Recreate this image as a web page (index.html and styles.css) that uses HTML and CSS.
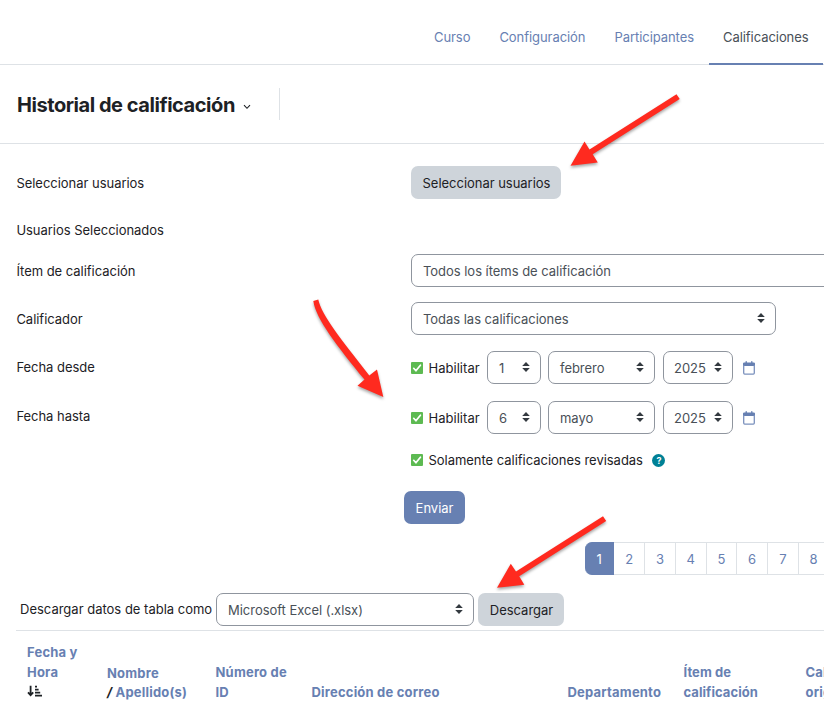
FILE: index.html
```html
<!DOCTYPE html>
<html lang="es">
<head>
<meta charset="utf-8">
<title>Historial de calificación</title>
<link rel="stylesheet" href="styles.css">
</head>
<body>
<svg class="defs" width="0" height="0" aria-hidden="true">
  <symbol id="sort" viewBox="0 0 8 10"><path d="M4 0 7.8 4H.2zM4 10 .2 6h7.6z" fill="#343a40"/></symbol>
  <symbol id="check" viewBox="0 0 12 12"><rect width="12" height="12" rx="1" fill="#5dba52"/><path d="M2.7 6.3 4.9 8.8 9.4 3.2" fill="none" stroke="#fff" stroke-width="1.7" stroke-linecap="round" stroke-linejoin="round"/></symbol>
  <symbol id="calendar" viewBox="0 0 12 14"><path d="M1.2 1.4h9.6a1.2 1.2 0 0 1 1.2 1.2V5H0V2.6a1.2 1.2 0 0 1 1.2-1.2z" fill="#6780b2"/><path d="M3.2.7v2M8.8.7v2" stroke="#6780b2" stroke-width="1.4" stroke-linecap="round"/><path d="M.7 4v8.1a1 1 0 0 0 1 1h8.6a1 1 0 0 0 1-1V4" fill="none" stroke="#7b91bd" stroke-width="1.3"/></symbol>
</svg>
<nav class="nav">
  <a class="tab">Curso</a><a class="tab">Configuración</a><a class="tab">Participantes</a><a class="tab active">Calificaciones</a>
</nav>
<header class="heading">
  <h1>Historial de calificación</h1>
  <svg class="chev" width="8" height="6" viewBox="0 0 8 6"><path d="M1 1.2 4 4.3 7 1.2" fill="none" stroke="#1d2125" stroke-width="1.1"/></svg>
  <span class="divider"></span>
</header>
<main>
  <div class="row users"><label>Seleccionar usuarios</label><button class="btn gray">Seleccionar usuarios</button></div>
  <div class="row selected"><label>Usuarios Seleccionados</label></div>
  <div class="row item"><label>Ítem de calificación</label><div class="select wide">Todos los ítems de calificación</div></div>
  <div class="row grader"><label>Calificador</label><div class="select full">Todas las calificaciones<svg class="sort"><use href="#sort"/></svg></div></div>
  <div class="row from"><label>Fecha desde</label>
    <div class="date"><svg class="check"><use href="#check"/></svg><span class="enable">Habilitar</span><div class="select day">1<svg class="sort"><use href="#sort"/></svg></div><div class="select month">febrero<svg class="sort"><use href="#sort"/></svg></div><div class="select year">2025<svg class="sort"><use href="#sort"/></svg></div><svg class="cal"><use href="#calendar"/></svg></div></div>
  <div class="row to"><label>Fecha hasta</label>
    <div class="date"><svg class="check"><use href="#check"/></svg><span class="enable">Habilitar</span><div class="select day">6<svg class="sort"><use href="#sort"/></svg></div><div class="select month">mayo<svg class="sort"><use href="#sort"/></svg></div><div class="select year">2025<svg class="sort"><use href="#sort"/></svg></div><svg class="cal"><use href="#calendar"/></svg></div></div>
  <div class="row revised"><label></label><div class="date"><svg class="check"><use href="#check"/></svg><span class="only">Solamente calificaciones revisadas</span><span class="help">?</span></div></div>
  <div class="submit"><button class="btn blue">Enviar</button></div>
  <ul class="pages"><li class="current">1</li><li>2</li><li>3</li><li>4</li><li>5</li><li>6</li><li>7</li><li>8</li></ul>
  <div class="download"><label>Descargar datos de tabla como</label><div class="select format">Microsoft Excel (.xlsx)<svg class="sort"><use href="#sort"/></svg></div><button class="btn gray">Descargar</button></div>
  <div class="thead">
    <div>Fecha y<br>Hora<br><svg class="order" width="16" height="13" viewBox="0 0 16 13"><path d="M3.6.8v9.4M1 7.4l2.6 2.8 2.6-2.8" fill="none" stroke="#1d2125" stroke-width="1.8"/><path d="M8 1.6h2M8 4.6h3.6M8 7.6h5.2M8 10.6h7" stroke="#1d2125" stroke-width="1.6"/></svg></div>
    <div class="name">Nombre<br><i>/</i> Apellido(s)</div>
    <div>Número de<br>ID</div>
    <div>Dirección de correo</div>
    <div>Departamento</div>
    <div>Ítem de<br>calificación</div>
    <div>Calificación<br>original</div>
  </div>
</main>
<svg class="arrows" width="824" height="702" viewBox="0 0 824 702" aria-hidden="true">
  <g fill="#ff2a1f">
    <path d="M676.5 94.2 679.7 99.1 592.7 154.2 597.8 162.6 570.5 165.8 584.5 141.5 589.5 149.4z"/>
    <path d="M313.3 301 318.3 299.6C322 316 340 338 369.3 375.4L377 369.4 383.3 397 357.5 385.8 364.5 379.6C337 346 316 319 313.3 301z"/>
    <path d="M603 516.2 606.2 521 519.2 576.2 524.3 584.7 497 587.8 510.8 563.8 516 571.6z"/>
  </g>
</svg>
</body>
</html>
```
FILE: styles.css
```css
* { box-sizing: border-box; }
html, body { margin: 0; height: 702px; overflow: hidden; }
body { position: relative; background: #fff; color: #1d2125; font: 13px/20px Inter, "Liberation Sans", sans-serif; letter-spacing: -0.03px; }
.defs { position: absolute; }
.nav { display: flex; justify-content: flex-end; height: 65px; padding-right: 1px; border-bottom: 1px solid #dee2e6; }
.tab { height: 65px; padding: 27px 14px 0; margin-left: 1px; color: #6780b2; letter-spacing: -0.06px; }
.tab.active { width: 114px; padding-right: 0; color: #495057; border-bottom: 2px solid #6780b2; }
.heading { display: flex; align-items: center; height: 79px; padding-left: 17px; border-bottom: 1px solid #dee2e6; }
h1 { margin: 2px 0 0; width: 218px; white-space: nowrap; font-size: 20px; font-weight: 700; line-height: 24px; letter-spacing: -0.45px; }
.chev { margin: 5px 0 0 8px; }
.divider { height: 32px; margin-left: 28px; border-left: 1px solid #dee2e6; }
main { padding-top: 22px; }
label { white-space: nowrap; }
.row { display: grid; grid-template-columns: 394.6px 1fr; align-items: center; height: 33px; padding-left: 16.4px; }
.selected { margin-top: 15px; }
.selected label { margin-top: -2px; }
.item { margin-top: 7px; }
.grader { margin-top: 15px; }
.from { margin-top: 16px; }
.from label { margin-top: -2px; }
.to { margin-top: 17px; }
.to label { margin-top: -3px; }
.revised { margin-top: 9px; }
.btn { height: 33px; padding: 1px 0 0; border: 0; border-radius: 7px; font: inherit; letter-spacing: inherit; color: #1d2125; }
.gray { background: #ced4da; }
.users .btn { width: 150px; padding-left: 1px; }
.select { display: flex; align-items: center; justify-content: space-between; height: 33px; padding: 1px 10px 0 11px; border: 1px solid #8f959e; border-radius: 7px; color: #495057; background: #fff; white-space: nowrap; }
.sort { width: 8px; height: 10px; margin-top: -2px; }
.wide { width: 440px; }
.full { width: 365px; }
.date { display: flex; align-items: center; }
.check { width: 12px; height: 12px; margin-top: 1px; flex: none; }
.enable { width: 59px; padding: 1px 0 0 5.5px; margin-right: 5px; letter-spacing: 0.03px; }
.day { width: 54px; }
.month { width: 107px; margin: 0 8px 0 7px; }
.year { width: 70px; padding-left: 10px; }
.cal { width: 12px; height: 14px; margin-left: 10px; }
.only { margin-left: 5.5px; }
.help { width: 13px; height: 13px; margin: 1px 0 0 9.5px; border-radius: 50%; background: #008196; color: #fff; font-size: 9px; font-weight: 700; line-height: 13px; text-align: center; }
.submit { padding: 15px 0 0 404px; height: 48px; }
.blue { width: 61px; background: #6780b2; color: #fff; }
.pages { display: flex; margin: 18px 0 0 585px; padding: 0; list-style: none; overflow: hidden; }
.pages li { width: 30.75px; height: 33px; flex: none; border: 1px solid #dee2e6; border-left-width: 0; color: #6780b2; text-align: center; line-height: 33px; }
.pages .current { width: 29.25px; color: #fff; background: #6780b2; border-color: #6780b2; border-radius: 7px 0 0 7px; }
.download { display: flex; align-items: center; margin-top: 18px; padding-left: 20px; }
.download label { width: 196px; margin-top: -2px; letter-spacing: 0; }
.format { width: 258px; margin-right: 4px; }
.download .btn { width: 86px; padding-left: 1px; }
.thead { display: grid; grid-template-columns: 80px 108.5px 96px 256px 116px 122px 60px; align-items: end; margin: 4px 0 0 16px; padding: 11px 0 0 11px; border-top: 1px solid #dee2e6; color: #6780b2; font-weight: 700; letter-spacing: 0.2px; white-space: nowrap; overflow: hidden; }
.thead div:nth-child(6) { letter-spacing: 0.06px; }
.name { line-height: 19px; }
.thead i { color: #1d2125; }
.order { display: block; margin: 3px 0 4px; }
.arrows { position: absolute; left: 0; top: 0; filter: drop-shadow(0 2px 1.5px rgba(0,0,0,.35)); pointer-events: none; }
```
